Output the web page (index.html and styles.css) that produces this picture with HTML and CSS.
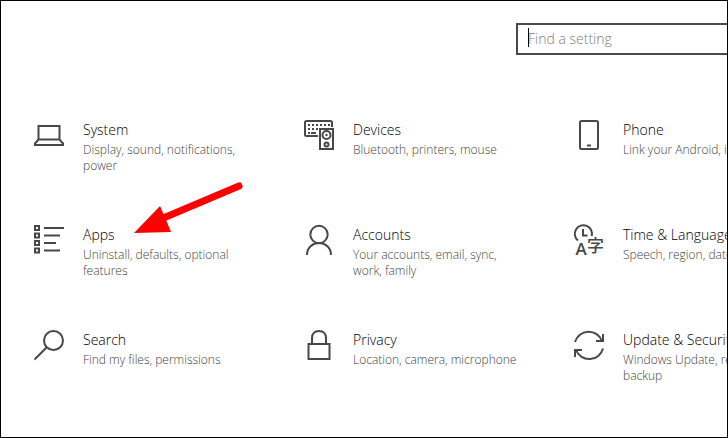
FILE: index.html
```html
<!DOCTYPE html>
<html lang="en">
<head>
<meta charset="utf-8">
<title>Settings</title>
<link rel="stylesheet" href="styles.css">
</head>
<body>
<main class="window">
  <form class="search" role="search">
    <label class="search-box">
      <input class="search-input" type="search" placeholder="Find a setting" aria-label="Find a setting">
      <span class="caret"></span>
    </label>
  </form>
  <nav class="categories" aria-label="Settings categories">
    <a class="category" href="#system">
      <svg class="icon" viewBox="0 0 30 30"><path d="M4.500 6h21v13.500h-21zM4.500 19.500L1 23.500V25h28v-1.500l-3.500-4"/></svg>
      <span class="text"><span class="title">System</span><span class="detail">Display, sound, notifications, power</span></span>
    </a>
    <a class="category" href="#devices">
      <svg class="icon" viewBox="0 0 30 30"><path d="M14 16H2.500Q1 16 1 14.500V2.500Q1 1 2.500 1H26.500Q28 1 28 2.500V7"/><path class="dots" d="M4 5h22M4 9h10M4 13h2"/><path d="M7 13h5"/><path d="M16 9h13v20H16z"/><circle cx="22.500" cy="15" r="4"/><circle class="solid" cx="22.500" cy="15" r="1.200"/><circle cx="22.500" cy="24.500" r="2"/></svg>
      <span class="text"><span class="title">Devices</span><span class="detail">Bluetooth, printers, mouse</span></span>
    </a>
    <a class="category" href="#phone">
      <svg class="icon" viewBox="0 0 30 30"><rect x="6" y="1" width="18" height="28" rx="1.500"/><path d="M13 25.500h4"/></svg>
      <span class="text"><span class="title">Phone</span><span class="detail">Link your Android, iPhone</span></span>
    </a>
    <a class="category" href="#apps">
      <svg class="icon" viewBox="0 0 30 30"><path d="M1 1h4v4H1zM1 8.500h4v4H1zM1 16h4v4H1zM1 23.500h4v4H1z"/><path d="M10 3h20M10 10.500h16M10 18h12M10 25.500h16"/></svg>
      <span class="text"><span class="title">Apps</span><span class="detail">Uninstall, defaults, optional features</span></span>
    </a>
    <a class="category" href="#accounts">
      <svg class="icon" viewBox="0 0 30 30"><circle cx="15" cy="9.500" r="8.700"/><path d="M3 30C3 22.500 8.500 18 15 18s12 4.500 12 12"/></svg>
      <span class="text"><span class="title">Accounts</span><span class="detail">Your accounts, email, sync, work, family</span></span>
    </a>
    <a class="category" href="#time">
      <svg class="icon" viewBox="0 0 30 30"><path d="M4 15.500A8.600 8.600 0 1 1 17.700 11M9 4v6.500h4.500"/><text class="latin" x="1.500" y="30">A</text><text class="cjk" x="13" y="27">字</text></svg>
      <span class="text"><span class="title">Time &amp; Language</span><span class="detail">Speech, region, date</span></span>
    </a>
    <a class="category" href="#search">
      <svg class="icon" viewBox="0 0 30 30"><circle cx="19.500" cy="10.500" r="9.500"/><path d="M12.800 17.200L.5 29.500"/></svg>
      <span class="text"><span class="title">Search</span><span class="detail">Find my files, permissions</span></span>
    </a>
    <a class="category" href="#privacy">
      <svg class="icon" viewBox="0 0 30 30"><path d="M4.500 14h21v15h-21zM8 14V8C8 3.500 11 1 15 1s7 2.500 7 7v6"/></svg>
      <span class="text"><span class="title">Privacy</span><span class="detail">Location, camera, microphone</span></span>
    </a>
    <a class="category" href="#update">
      <svg class="icon" viewBox="0 0 30 30"><path d="M1 12A14.200 14.200 0 0 1 28 11M29 4v7h-7M29 18.500A14.200 14.200 0 0 1 2 20M1 27v-7h7"/></svg>
      <span class="text"><span class="title">Update &amp; Security</span><span class="detail">Windows Update, recovery, backup</span></span>
    </a>
  </nav>
  <svg class="arrow" viewBox="0 0 112 54" aria-hidden="true"><path d="M106 6L28 39"/><polygon points="1,53 27,26 38,52"/></svg>
</main>
</body>
</html>
```
FILE: styles.css
```css
* {
  box-sizing: border-box;
}

body {
  margin: 0;
  background: #fff;
  font-family: "Open Sans", "Noto Sans", sans-serif;
  font-weight: 300;
}

.window {
  position: relative;
  min-height: 100vh;
  padding: 22px 0 0 33px;
  border: 1px solid #000;
  overflow: hidden;
}

.search {
  display: flex;
  padding-left: 482px;
}

.search-box {
  position: relative;
  flex: none;
  width: 320px;
}

.search-input {
  display: block;
  width: 100%;
  height: 32px;
  padding: 0 10px 2px;
  border: 2px solid #4a4a4a;
  border-radius: 0;
  outline: 0;
  background: #fff;
  font: 300 14px "Open Sans", "Noto Sans", sans-serif;
  appearance: none;
}

.search-input::placeholder {
  color: #808080;
  opacity: 1;
}

.caret {
  position: absolute;
  top: 5px;
  left: 12px;
  width: 1px;
  height: 19px;
  background: #000;
}

.categories {
  display: grid;
  grid-template-columns: repeat(3, 270px);
  grid-auto-rows: 105px;
  margin-top: 65px;
}

.category {
  display: flex;
  align-items: flex-start;
  gap: 19px;
  color: #000;
  text-decoration: none;
}

.icon {
  flex: none;
  width: 30px;
  height: 30px;
  overflow: visible;
  fill: none;
  stroke: #484848;
  stroke-width: 2;
}

.icon .dots {
  stroke-dasharray: 2 2;
}

.icon .solid,
.icon text {
  fill: #484848;
  stroke: none;
}

.icon .latin {
  font: 600 17px "Open Sans", sans-serif;
}

.icon .cjk {
  font: 500 17px "Noto Sans CJK JP", sans-serif;
}

.text {
  width: 172px;
}

.title,
.detail {
  display: block;
}

.title {
  font-size: 14px;
  font-weight: 340;
  line-height: 20px;
  white-space: nowrap;
}

.detail {
  margin-top: 2px;
  color: #444;
  font-size: 12px;
  line-height: 16px;
}

.arrow {
  position: absolute;
  top: 179px;
  left: 132px;
  width: 112px;
  height: 54px;
  fill: #f00;
}

.arrow path {
  stroke: #f00;
  stroke-width: 7;
  stroke-linecap: round;
}
```
